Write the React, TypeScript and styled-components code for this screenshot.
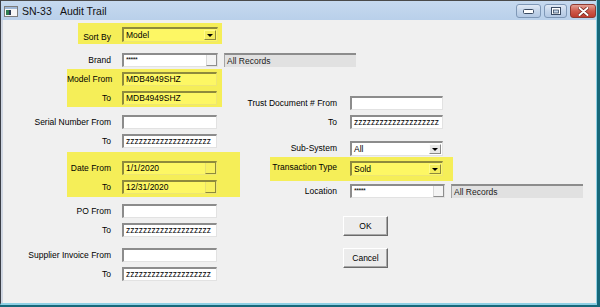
import React from "react"
import styled, { createGlobalStyle } from "styled-components"

const GlobalStyle = createGlobalStyle`
	html, body {
		margin: 0;
		padding: 0;
	}
	body {
		width: 600px;
		height: 307px;
		overflow: hidden;
		background: #17687a;
		font-family: "Liberation Sans", Arial, sans-serif;
	}
`

const Desktop = styled.div`
	width: 600px;
	height: 307px;
	background: #17687a;
`

const Window = styled.div`
	width: 597px;
	height: 305px;
	box-sizing: border-box;
	display: flex;
	flex-direction: column;
	background: #cfd6e2;
	border-left: 1px solid #3b3e46;
	border-right: 1px solid #8fd1e5;
	border-bottom: 2px solid #8fd1e5;
`

const TitleBar = styled.div`
	height: 20px;
	box-sizing: border-box;
	flex: none;
	display: flex;
	align-items: center;
	padding: 1px 0 0 3px;
	border-top: 1px solid #4a4a4a;
	background: linear-gradient(#c6d9ef, #b9d0ea);
`

const Title = styled.span`
	margin-left: 4px;
	font-size: 10.5px;
	color: #111;
	white-space: pre;
`

const Controls = styled.div`
	margin-left: auto;
	display: flex;
	gap: 3px;
`

const CtlButton = styled.div<{ $w: number; $close?: boolean }>`
	width: ${(p) => p.$w}px;
	height: 14px;
	box-sizing: border-box;
	border-radius: 3px;
	display: flex;
	align-items: center;
	justify-content: center;
	border: 1px solid ${(p) => (p.$close ? "#8d3a31" : "#7f98b7")};
	background: ${(p) =>
		p.$close
			? "linear-gradient(#e3a195, #cf5a4c 50%, #bf3c2f)"
			: "linear-gradient(#e1eaf6, #c4d5ea 50%, #b3c8e3)"};
`

const Client = styled.div`
	flex: 1;
	margin-left: 2px;
	display: flex;
	background: #f0f0f0;
	font-size: 8.5px;
	color: #000;
`

const LeftCol = styled.div`
	width: 215px;
	flex: none;
	display: flex;
	flex-direction: column;
	padding-top: 3px;
`

const RightCol = styled.div`
	margin-left: 22px;
	display: flex;
	flex-direction: column;
	align-items: flex-start;
	padding-top: 73px;
`

const Row = styled.div<{ $h?: number; $mt?: number }>`
	display: flex;
	align-items: center;
	height: ${(p) => p.$h ?? 19}px;
	margin-top: ${(p) => p.$mt ?? 0}px;
	flex: none;
`

const Label = styled.div<{ $w: number; $pr?: number; $dy?: number }>`
	width: ${(p) => p.$w}px;
	flex: none;
	box-sizing: border-box;
	padding-right: ${(p) => p.$pr ?? 11}px;
	padding-top: ${(p) => (p.$dy && p.$dy > 0 ? p.$dy * 2 : 0)}px;
	padding-bottom: ${(p) => (p.$dy && p.$dy < 0 ? -p.$dy * 2 : 0)}px;
	text-align: right;
	white-space: nowrap;
`

const Field = styled.div<{ $w: number; $h?: number }>`
	width: ${(p) => p.$w}px;
	height: ${(p) => p.$h ?? 14}px;
	flex: none;
	box-sizing: border-box;
	display: flex;
	align-items: center;
	padding-left: 2px;
	overflow: hidden;
	white-space: nowrap;
	background: #fff;
	border-style: solid;
	border-width: 2px 1px 1px 2px;
	border-color: #8c8c8c #e2e2e2 #e2e2e2 #8c8c8c;
`

const Value = styled.span<{ $stars?: boolean }>`
	font-size: ${(p) => (p.$stars ? "7px" : "8.5px")};
	letter-spacing: ${(p) => (p.$stars ? "-0.5px" : "0")};
	${(p) => (p.$stars ? "margin-top: -2px;" : "")}
`

const DropButton = styled.div`
	margin-left: auto;
	margin-right: 1px;
	width: 12px;
	height: 10px;
	box-sizing: border-box;
	display: flex;
	align-items: center;
	justify-content: center;
	background: #e8e8e8;
	border: 1px solid;
	border-color: #fdfdfd #8a8a8a #8a8a8a #fdfdfd;
	&::after {
		content: "";
		border-left: 3px solid transparent;
		border-right: 3px solid transparent;
		border-top: 3px solid #000;
	}
`

const PickButton = styled.div`
	margin-left: auto;
	width: 11px;
	height: 100%;
	box-sizing: border-box;
	background: #f4f4f4;
	border-left: 1px solid #d8d8d8;
	border-right: 1px solid #8e8e8e;
	border-bottom: 1px solid #8e8e8e;
`

const Static = styled.div`
	margin-left: 6px;
	width: 132px;
	height: 14px;
	flex: none;
	box-sizing: border-box;
	display: flex;
	align-items: center;
	padding-left: 2px;
	background: #e1e1e1;
	color: #222;
	border-top: 2px solid #8c8c8c;
	border-left: 1px solid #a4a4a4;
	white-space: nowrap;
`

const Highlight = styled.div<{ $ml: number; $ext: number; $pt?: number; $pb?: number; $mt?: number }>`
	display: flex;
	flex-direction: column;
	align-self: ${(p) => (p.$ext < 0 ? "flex-start" : "stretch")};
	margin-top: ${(p) => p.$mt ?? 0}px;
	margin-left: ${(p) => p.$ml}px;
	margin-right: ${(p) => (p.$ext > 0 ? -p.$ext : 0)}px;
	padding-right: ${(p) => Math.abs(p.$ext)}px;
	padding-top: ${(p) => p.$pt ?? 0}px;
	padding-bottom: ${(p) => p.$pb ?? 0}px;
	background: #f5ee58;
	${Field} {
		background: #fdf764;
		border-color: #8e8a3c #eee672 #eee672 #8e8a3c;
	}
	${DropButton} {
		background: #f3ec5c;
		border-color: #fffb8a #8e8a3c #8e8a3c #fffb8a;
	}
	${PickButton} {
		background: #f8f160;
		border-left-color: #e8e070;
		border-right-color: #8e8a3c;
		border-bottom-color: #8e8a3c;
	}
`

const PushButton = styled.button<{ $mt: number }>`
	margin: ${(p) => p.$mt}px 0 0 103px;
	width: 45px;
	height: 20px;
	padding: 0;
	box-sizing: border-box;
	font-family: inherit;
	font-size: 8.5px;
	color: #000;
	background: #ececec;
	border: 1px solid;
	border-color: #fff #6a6a6a #6a6a6a #fff;
	box-shadow: inset -1px -1px 0 #a8a8a8;
`

const AppIcon = () => (
	<svg width="14" height="11" viewBox="0 0 14 11">
		<rect x="0.5" y="0.5" width="13" height="10" fill="#f6f6f6" stroke="#7d7d7d" />
		<rect x="1" y="1" width="12" height="2" fill="#9fb7d6" />
		<rect x="2" y="4" width="3" height="5" fill="#2f7d50" />
		<rect x="5" y="4" width="2" height="5" fill="#2b3a55" />
	</svg>
)

const MinGlyph = () => (
	<svg width="11" height="5" viewBox="0 0 11 5">
		<rect x="0.5" y="0.5" width="10" height="4" rx="1" fill="#fff" stroke="#3a4b63" />
	</svg>
)

const MaxGlyph = () => (
	<svg width="10" height="8" viewBox="0 0 10 8">
		<rect x="0.5" y="0.5" width="9" height="7" fill="#fff" stroke="#3a4b63" />
		<rect x="2.5" y="3" width="5" height="3" fill="#c4d5ea" stroke="#3a4b63" strokeWidth="0.8" />
	</svg>
)

const CloseGlyph = () => (
	<svg width="11" height="9" viewBox="0 0 11 9">
		<path d="M1.5 1 L9.5 8 M9.5 1 L1.5 8" stroke="#6a211b" strokeWidth="3.4" strokeLinecap="round" />
		<path d="M1.5 1 L9.5 8 M9.5 1 L1.5 8" stroke="#fff" strokeWidth="2" strokeLinecap="round" />
	</svg>
)

const Z = "zzzzzzzzzzzzzzzzzzzz"

const Combo: React.FC<{ w: number; value: string }> = ({ w, value }) => (
	<Field $w={w} $h={15}>
		<Value>{value}</Value>
		<DropButton />
	</Field>
)

const Picker: React.FC<{ w: number; value: string; stars?: boolean }> = ({ w, value, stars }) => (
	<Field $w={w}>
		<Value $stars={stars}>{value}</Value>
		<PickButton />
	</Field>
)

const Text: React.FC<{ w?: number; value?: string }> = ({ w = 95, value = "" }) => (
	<Field $w={w}>
		<Value>{value}</Value>
	</Field>
)

export default function App() {
	return (
		<Desktop>
			<GlobalStyle />
			<Window>
				<TitleBar>
					<AppIcon />
					<Title>SN-33   Audit Trail</Title>
					<Controls>
						<CtlButton $w={25}>
							<MinGlyph />
						</CtlButton>
						<CtlButton $w={23}>
							<MaxGlyph />
						</CtlButton>
						<CtlButton $w={26} $close>
							<CloseGlyph />
						</CtlButton>
					</Controls>
				</TitleBar>
				<Client>
					<LeftCol>
						<Highlight $ml={75} $ext={4} $pt={3} $pb={1}>
							<Row $h={17}>
								<Label $w={44} $dy={2}>Sort By</Label>
								<Combo w={96} value="Model" />
							</Row>
						</Highlight>
						<Row $mt={6}>
							<Label $w={119}>Brand</Label>
							<Picker w={96} value="*****" stars />
							<Static>All Records</Static>
						</Row>
						<Highlight $ml={64} $ext={4}>
							<Row>
								<Label $w={55}>Model From</Label>
								<Text value="MDB4949SHZ" />
							</Row>
							<Row>
								<Label $w={55}>To</Label>
								<Text value="MDB4949SHZ" />
							</Row>
						</Highlight>
						<Row $mt={5}>
							<Label $w={119}>Serial Number From</Label>
							<Text />
						</Row>
						<Row>
							<Label $w={119}>To</Label>
							<Text value={Z} />
						</Row>
						<Highlight $ml={64} $ext={22} $mt={2} $pt={6} $pb={1}>
							<Row>
								<Label $w={55}>Date From</Label>
								<Picker w={95} value="1/1/2020" />
							</Row>
							<Row>
								<Label $w={55}>To</Label>
								<Picker w={95} value="12/31/2020" />
							</Row>
						</Highlight>
						<Row $mt={4}>
							<Label $w={119}>PO From</Label>
							<Text />
						</Row>
						<Row>
							<Label $w={119}>To</Label>
							<Text value={Z} />
						</Row>
						<Row $mt={6}>
							<Label $w={119}>Supplier Invoice From</Label>
							<Text />
						</Row>
						<Row>
							<Label $w={119}>To</Label>
							<Text value={Z} />
						</Row>
					</LeftCol>
					<RightCol>
						<Row>
							<Label $w={110} $pr={13}>Trust Document # From</Label>
							<Text w={93} />
						</Row>
						<Row>
							<Label $w={110} $pr={13}>To</Label>
							<Text w={93} value={Z} />
						</Row>
						<Row $h={17} $mt={9}>
							<Label $w={110} $pr={13} $dy={-1}>Sub-System</Label>
							<Combo w={93} value="All" />
						</Row>
						<Highlight $ml={30} $ext={-10} $pt={2} $pb={3}>
							<Row>
								<Label $w={80} $pr={13} $dy={-2}>Transaction Type</Label>
								<Combo w={93} value="Sold" />
							</Row>
						</Highlight>
						<Row>
							<Label $w={110} $pr={13}>Location</Label>
							<Picker w={95} value="*****" stars />
							<Static>All Records</Static>
						</Row>
						<PushButton $mt={16}>OK</PushButton>
						<PushButton $mt={12}>Cancel</PushButton>
					</RightCol>
				</Client>
			</Window>
		</Desktop>
	)
}
